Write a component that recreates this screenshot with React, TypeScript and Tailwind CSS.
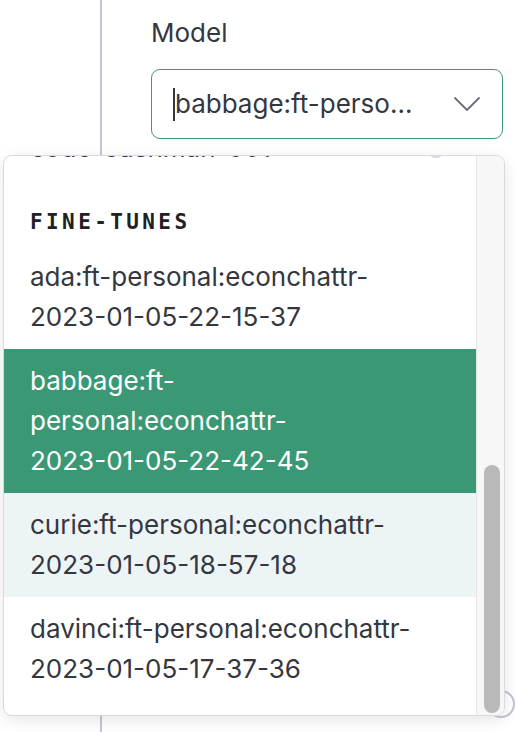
import { ChevronDown } from "lucide-react";

type Option = {
  model: string;
  stamp: string;
  state?: "selected" | "hover";
};

const fineTunes: Option[] = [
  { model: "ada:ft-personal:econchattr-", stamp: "2023-01-05-22-15-37" },
  { model: "babbage:ft-personal:econchattr-", stamp: "2023-01-05-22-42-45", state: "selected" },
  { model: "curie:ft-personal:econchattr-", stamp: "2023-01-05-18-57-18", state: "hover" },
  { model: "davinci:ft-personal:econchattr-", stamp: "2023-01-05-17-37-36" },
];

function OptionRow({ option }: { option: Option }) {
  const tone =
    option.state === "selected"
      ? "bg-[#3a9875] text-white"
      : option.state === "hover"
        ? "bg-[#edf4f6] text-[#353740]"
        : "bg-white text-[#353740]";

  return (
    <div className={`py-3 pl-[26px] pr-[54px] ${tone}`}>
      {option.model}
      <span className="whitespace-nowrap">{option.stamp}</span>
    </div>
  );
}

function ModelMenu() {
  return (
    <div className="absolute left-[3px] top-[155px] z-10 flex h-[561px] w-[502px] overflow-hidden rounded-[9px] border border-[#d9d9e3] bg-white shadow-[0_4px_16px_rgba(0,0,0,0.10)]">
      <div className="flex-1 overflow-hidden">
        <div className="-mt-[40px]">
          <div className="flex items-center justify-between py-3 pl-[26px] pr-[30px] text-[#353740]">
            <span>code-cushman-001</span>
            <span className="h-[20px] w-[20px] rounded-full bg-[#d9d9e3]" />
          </div>
          <div className="pb-[11px] pl-[26px] pt-[30px] font-['DejaVu_Sans_Mono',monospace] text-[21px] font-bold leading-[24px] tracking-[3.4px] text-[#202123]">
            FINE-TUNES
          </div>
          {fineTunes.map((option) => (
            <OptionRow key={option.model} option={option} />
          ))}
        </div>
      </div>
      <div className="w-[28px] border-l border-[#e6e6e6] bg-[#f7f7f7] pl-[7px] pr-[4px] pt-[309px]">
        <div className="h-[248px] w-[16px] rounded-full bg-[#b9b9b9]" />
      </div>
    </div>
  );
}

export default function App() {
  return (
    <div className="relative h-[732px] w-[516px] overflow-hidden bg-white font-['Inter',sans-serif] text-[26px] leading-[40px] text-[#353740]">
      <div className="flex h-full">
        <div className="w-[100px] shrink-0" />
        <div className="flex-1 border-l-2 border-[#c5c3d5] pl-[49px] pr-[13px] pt-[13px]">
          <div>Model</div>
          <div className="mt-[16px] flex h-[70px] items-center rounded-[9px] border-[1.5px] border-[#3b9a77] pl-[21px] pr-[11px]">
            <span className="h-[33px] w-[2px] bg-[#353740]" />
            <span className="flex-1 truncate">babbage:ft-perso...</span>
            <ChevronDown className="h-[48px] w-[48px] text-[#6e6e80]" strokeWidth={0.9} />
          </div>
        </div>
      </div>
      <div className="absolute left-[487px] top-[690px] h-[28px] w-[28px] rounded-full border-2 border-[#c3c3d3] bg-white" />
      <ModelMenu />
    </div>
  );
}
